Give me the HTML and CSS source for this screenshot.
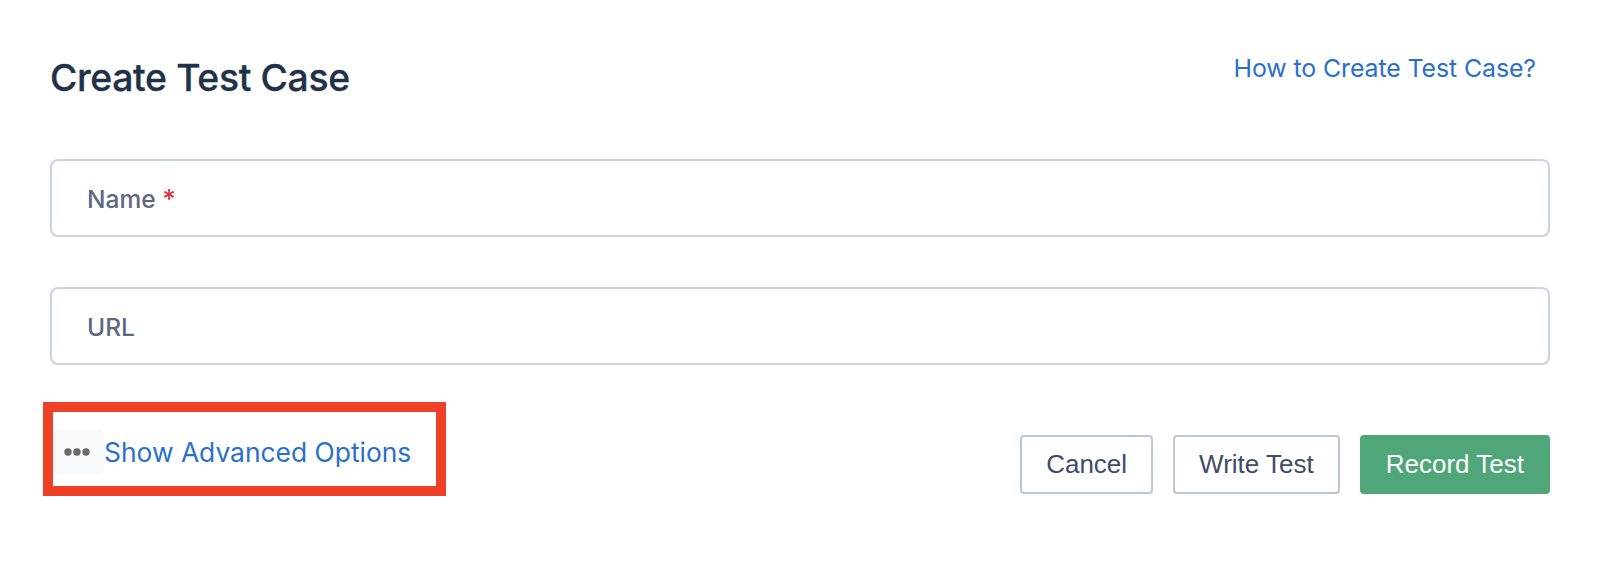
FILE: index.html
```html
<!DOCTYPE html>
<html lang="en">
<head>
<meta charset="utf-8">
<title>Create Test Case</title>
<link rel="stylesheet" href="styles.css">
</head>
<body>
<main class="panel">
  <header class="head">
    <h1 class="title">Create Test Case</h1>
    <a class="help" href="#">How to Create Test Case?</a>
  </header>
  <div class="field"><span class="label">Name <span class="req">*</span></span></div>
  <div class="field field-second"><span class="label">URL</span></div>
  <footer class="foot">
    <div class="advanced">
      <span class="more"><svg class="dots" viewBox="0 0 26 8" width="26" height="8"><circle cx="4" cy="4" r="3.7"/><circle cx="13" cy="4" r="3.7"/><circle cx="22" cy="4" r="3.7"/></svg></span>
      <a class="adv-link" href="#">Show Advanced Options</a>
    </div>
    <div class="actions">
      <button class="btn">Cancel</button>
      <button class="btn">Write Test</button>
      <button class="btn primary">Record Test</button>
    </div>
  </footer>
</main>
</body>
</html>
```

FILE: styles.css
```css
*, *::after { box-sizing: border-box; }
html, body { margin: 0; background: #fff; }
body { font-family: Inter, "Liberation Sans", sans-serif; width: 1624px; height: 564px; overflow: hidden; }
.panel { padding: 0 74px 0 50px; }
.head { display: flex; justify-content: space-between; align-items: flex-start; height: 159px; padding-top: 53px; }
.title { margin: 0; font-size: 37.3px; line-height: 50px; font-weight: 500; color: #1f3249; letter-spacing: -0.35px; -webkit-text-stroke: 0.3px #1f3249; }
.help { font-size: 24.9px; line-height: 32px; margin: -2px 14px 0 0; padding-top: 1px; color: #2a6fcb; text-decoration: none; letter-spacing: -0.1px; }
.field { height: 78px; border: 2px solid #c6d3e0; border-radius: 8px; padding: 1px 0 0 35px; display: flex; align-items: center; background: #fff; }
.field-second { margin-top: 50px; }
.label { font-size: 24.5px; font-weight: 500; color: #5d6880; }
.req { color: #d0393f; font-size: 26px; }
.foot { display: flex; justify-content: space-between; align-items: flex-start; }
.advanced { display: flex; align-items: center; margin-top: 64px; height: 46px; position: relative; }
.advanced::after { content: ""; position: absolute; left: -7px; top: -27px; width: 403px; height: 94px; border: 10px solid #ee4026; pointer-events: none; }
.more { width: 54px; height: 46px; padding-left: 14px; border-radius: 6px; background: #f8f9fb; display: flex; align-items: center; }
.dots { fill: #6b6b6b; }
.adv-link { font-size: 26.4px; color: #2a6fcb; text-decoration: none; }
.actions { display: flex; gap: 20px; margin-top: 70px; }
.btn { height: 59px; padding: 0 24px; border: 2px solid #b9c9d8; border-radius: 4px; background: #fff; color: #3f4c69; font-family: "Liberation Sans", sans-serif; font-size: 26px; }
.primary { background: #4fa678; border-color: #4fa678; color: #fff; }
```
